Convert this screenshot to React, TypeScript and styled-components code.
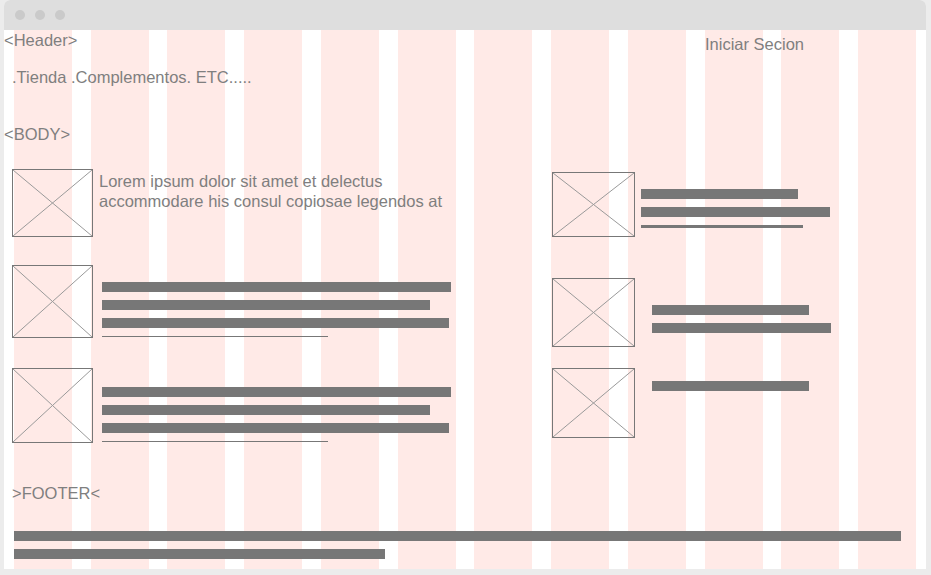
import styled, { createGlobalStyle } from "styled-components"

const Global = createGlobalStyle`
  html, body { margin: 0; padding: 0; }
  body {
    background: #ececec;
    font-family: "Liberation Sans", Arial, sans-serif;
  }
`

const leftRows = [
  { top: 0, h: 68, lorem: true },
  { top: 28, h: 73, pad: 17, bars: [349, 328, 347], thin: 226 },
  { top: 30, h: 75, pad: 19, bars: [349, 328, 347], thin: 226 },
]

const rightRows = [
  { top: 3, h: 65, gap: 6, pad: 17, bars: [157, 189], thin: 162, thinH: 3 },
  { top: 41, h: 69, gap: 17, pad: 27, bars: [157, 179] },
  { top: 21, h: 70, gap: 17, pad: 13, bars: [157] },
]

const Placeholder = ({ w, h }: { w: number; h: number }) => (
  <Pic width={w} height={h} viewBox={`0 0 ${w} ${h}`}>
    <line x1="1" y1="1" x2={w - 1} y2={h - 1} stroke="#9a9a9a" strokeWidth="1" />
    <line x1={w - 1} y1="1" x2="1" y2={h - 1} stroke="#9a9a9a" strokeWidth="1" />
    <rect x="0.5" y="0.5" width={w - 1} height={h - 1} fill="none" stroke="#777" strokeWidth="1" />
  </Pic>
)

const App = () => {
  return (
    <>
      <Global />
      <Window>
        <TitleBar>
          <Dot />
          <Dot />
          <Dot />
        </TitleBar>
        <Content>
          <Columns>
            {Array.from({ length: 12 }).map((_, i) => (
              <Col key={i} />
            ))}
          </Columns>
          <Layer>
            <HeaderRow>
              <Label>&lt;Header&gt;</Label>
              <Login>Iniciar Secion</Login>
            </HeaderRow>
            <Nav>.Tienda .Complementos. ETC.....</Nav>
            <Section>&lt;BODY&gt;</Section>
            <Body>
              <LeftCol>
                {leftRows.map((r, i) => (
                  <Row key={i} $top={r.top} $gap={r.lorem ? 6 : 9}>
                    <Placeholder w={81} h={r.h} />
                    {r.lorem ? (
                      <Lorem>
                        Lorem ipsum dolor sit amet et delectus
                        <br />
                        accommodare his consul copiosae legendos at
                      </Lorem>
                    ) : (
                      <Lines $pad={r.pad || 0}>
                        {r.bars!.map((b, j) => (
                          <Bar key={j} $w={b} />
                        ))}
                        <Thin $w={r.thin!} $h={1} />
                      </Lines>
                    )}
                  </Row>
                ))}
              </LeftCol>
              <RightCol>
                {rightRows.map((r, i) => (
                  <Row key={i} $top={r.top} $gap={r.gap}>
                    <Placeholder w={83} h={r.h} />
                    <Lines $pad={r.pad}>
                      {r.bars.map((b, j) => (
                        <Bar key={j} $w={b} />
                      ))}
                      {r.thin && <Thin $w={r.thin} $h={r.thinH || 1} />}
                    </Lines>
                  </Row>
                ))}
              </RightCol>
            </Body>
            <Footer>
              <FooterLabel>&gt;FOOTER&lt;</FooterLabel>
              <FooterLines>
                <Bar $w={887} />
                <Bar $w={371} />
              </FooterLines>
            </Footer>
          </Layer>
        </Content>
      </Window>
    </>
  )
}

export default App

const Window = styled.div`
  margin-left: 4px;
  width: 922px;
  height: 569px;
  background: #fff;
  border-radius: 6px 6px 0 0;
  overflow: hidden;
  display: flex;
  flex-direction: column;
`
const TitleBar = styled.div`
  height: 30px;
  background: #dedede;
  display: flex;
  align-items: center;
  gap: 10px;
  padding-left: 11px;
  flex-shrink: 0;
`
const Dot = styled.div`
  width: 10px;
  height: 10px;
  border-radius: 50%;
  background: #cacaca;
`
const Content = styled.div`
  position: relative;
  flex: 1;
`
const Columns = styled.div`
  position: absolute;
  top: 0;
  bottom: 0;
  left: 10px;
  width: 902px;
  display: grid;
  grid-template-columns: repeat(12, 1fr);
  column-gap: 18.8px;
`
const Col = styled.div`
  background: #ffeae7;
`
const Layer = styled.div`
  position: relative;
  color: #7f7f7f;
  font-size: 16.5px;
  line-height: 18px;
`
const HeaderRow = styled.div`
  display: grid;
  grid-template-columns: 701px 1fr;
  align-items: start;
  padding-top: 1px;
  height: 18px;
`
const Label = styled.div``
const Login = styled.div`
  margin-top: 4px;
`
const Nav = styled.div`
  margin-top: 19px;
  padding-left: 8px;
`
const Section = styled.div`
  margin-top: 39px;
`
const Body = styled.div`
  margin-top: 26px;
  display: flex;
  padding-left: 8px;
`
const LeftCol = styled.div`
  width: 540px;
  display: flex;
  flex-direction: column;
`
const RightCol = styled.div`
  display: flex;
  flex-direction: column;
`
const Row = styled.div<{ $top: number; $gap: number }>`
  display: flex;
  align-items: flex-start;
  margin-top: ${(p) => p.$top}px;
  gap: ${(p) => p.$gap}px;
`
const Pic = styled.svg`
  display: block;
  flex-shrink: 0;
`
const Lorem = styled.div`
  padding-top: 2px;
  line-height: 20px;
`
const Lines = styled.div<{ $pad: number }>`
  padding-top: ${(p) => p.$pad}px;
  display: flex;
  flex-direction: column;
  gap: 8px;
`
const Bar = styled.div<{ $w: number }>`
  width: ${(p) => p.$w}px;
  height: 10px;
  background: #777;
`
const Thin = styled.div<{ $w: number; $h: number }>`
  width: ${(p) => p.$w}px;
  height: ${(p) => p.$h}px;
  background: #777;
`
const Footer = styled.div`
  margin-top: 41px;
  padding-left: 8px;
`
const FooterLabel = styled.div``
const FooterLines = styled.div`
  margin-top: 29px;
  padding-left: 2px;
  display: flex;
  flex-direction: column;
  gap: 8px;
`
